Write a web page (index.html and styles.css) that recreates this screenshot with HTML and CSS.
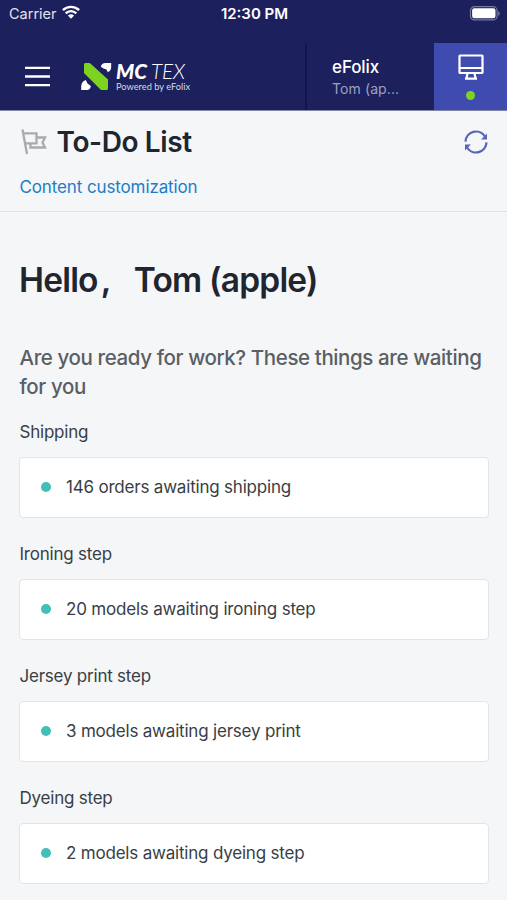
FILE: index.html
```html
<!DOCTYPE html>
<html lang="en">
<head>
<meta charset="utf-8">
<title>To-Do List</title>
<link rel="stylesheet" href="styles.css">
</head>
<body>
<header class="top">
  <div class="status">
    <div class="carrier"><span>Carrier</span>
      <svg width="18" height="14" viewBox="0 0 18 14" fill="none" stroke="#fff" stroke-width="2.4"><path d="M.9 5.2a11.5 11.5 0 0 1 16.2 0M3.7 8.3a7.5 7.5 0 0 1 10.6 0"/><path d="M9 13.8 5.9 10.6a4.5 4.5 0 0 1 6.2 0Z" fill="#fff" stroke="none"/></svg>
    </div>
    <div class="time">12:30 PM</div>
    <svg class="battery" width="31" height="15" viewBox="0 0 31 15"><rect x="1.5" y=".7" width="26.6" height="13.2" rx="4" fill="none" stroke="#777a9d" stroke-width="1.2"/><rect x="3.1" y="2.3" width="23.4" height="10" rx="2.3" fill="#fff"/><path d="M29.2 5v5q1.500-.7 1.500-2.500T29.200 5" fill="#777a9d"/></svg>
  </div>
  <nav class="nav">
    <div class="brand">
      <svg class="menu" width="25" height="21" viewBox="0 0 25 21" stroke="#fff" stroke-width="2.4"><path d="M0 1.900h25M0 10.500h25M0 19.100h25"/></svg>
      <svg class="logo" width="112" height="32" viewBox="0 0 112 32">
        <path d="M4 2h4.800L27 18.500V28L26 29h-6L3 12V3Z" fill="#7ed321"/>
        <path d="M19.800 5.800Q20.500 2.200 24.500 2H30.200V6Q30.200 9.800 26.800 11.200L25.500 8.500 22.500 7.500Z" fill="#fff"/>
        <path d="M4.800 19 6.500 22.500 9.800 25Q9.500 28.500 6.500 29H.2V25.500Q.3 20.500 4.800 19Z" fill="#fff"/>
        <text class="mc" x="35" y="17.500" textLength="31" lengthAdjust="spacingAndGlyphs">MC</text>
        <text class="tex" x="70" y="17.500" textLength="34" lengthAdjust="spacingAndGlyphs">TEX</text>
        <text class="powered" x="35" y="28.800" textLength="74" lengthAdjust="spacingAndGlyphs">Powered by eFolix</text>
      </svg>
    </div>
    <div class="user"><div class="company">eFolix</div><div class="name">Tom (ap...</div></div>
    <div class="device">
      <svg width="26" height="26" viewBox="0 0 26 26" fill="none" stroke="#fff" stroke-width="2.2"><rect x="1.500" y="1.500" width="23" height="17.500" rx=".5"/><path d="M1.500 14h23M9.500 19 8.500 24.500M16.500 19l1 5.500M7 24.700h12"/></svg>
      <i class="online"></i>
    </div>
  </nav>
</header>
<section class="heading">
  <div class="title-row">
    <svg class="flag" width="26" height="26" viewBox="0 0 26 26" fill="none" stroke="#a9abb1" stroke-width="2.3"><path d="M1.500.5 6 25M2.200 4.300H15.500V14.300H4M15.500 8.500H24L21.500 13.500 24 18.500H9.500V14.300" /></svg>
    <h1>To-Do List</h1>
    <svg class="refresh" width="24" height="24" viewBox="0 0 24 24" fill="none" stroke="#5865b9" stroke-width="2.3"><path d="M1.500 11.600A10.500 10.500 0 0 1 20.900 6.500M22.500 12.400A10.500 10.500 0 0 1 3.100 17.500"/><path d="M23 3.500V9.400H17.100ZM1 20.500V14.600H6.900Z" fill="#5865b9" stroke="none"/></svg>
  </div>
  <a class="customize">Content customization</a>
</section>
<main>
  <h2><span>Hello</span><span class="comma">,</span><span>Tom (apple)</span></h2>
  <p class="intro">Are you ready for work? These things are waiting<br>for you</p>
  <section class="group"><h3>Shipping</h3><div class="card"><i></i><span>146 orders awaiting shipping</span></div></section>
  <section class="group"><h3>Ironing step</h3><div class="card"><i></i><span>20 models awaiting ironing step</span></div></section>
  <section class="group"><h3>Jersey print step</h3><div class="card"><i></i><span>3 models awaiting jersey print</span></div></section>
  <section class="group"><h3>Dyeing step</h3><div class="card"><i></i><span>2 models awaiting dyeing step</span></div></section>
</main>
</body>
</html>
```
FILE: styles.css
```css
* { box-sizing: border-box; }
body { margin: 0; height: 900px; overflow: hidden; background: #f4f6f8; color: #393e45; font-family: Inter, "Liberation Sans", sans-serif; }
h1, h2, h3, p { margin: 0; }
svg { display: block; flex: none; overflow: visible; }
.top { height: 111px; background: #1c215e; color: #fff; border-bottom: 1px solid #8085a5; }
.status { height: 43px; padding: 5px 7px 0 9px; display: grid; grid-template-columns: 1fr auto 1fr; align-items: start; }
.carrier { display: flex; gap: 5px; font-size: 14.500px; line-height: 18px; color: #e1e2ed; }
.time { font-size: 15px; line-height: 18px; font-weight: 600; }
.battery { justify-self: end; margin-top: 1px; }
.nav { height: 67px; display: grid; grid-template-columns: 305px 129px 73px; }
.brand { display: flex; padding: 18px 0 0 25px; }
.menu { margin-top: 5px; }
.logo { margin-left: 31px; }
.mc, .tex, .powered { font-family: Lato, sans-serif; fill: #fff; }
.mc { font-size: 21px; font-weight: 900; font-style: italic; }
.tex { font-size: 21.500px; font-weight: 300; font-style: italic; }
.powered { font-size: 10px; fill: #d6d7e5; }
.user { border-left: 2px solid #11164c; padding: 13px 0 0 25px; }
.company { font-size: 17px; line-height: 22px; font-weight: 500; letter-spacing: -.1px; }
.name { font-size: 14px; line-height: 22px; color: #9da0be; letter-spacing: .1px; }
.device { background: #404bb0; display: flex; flex-direction: column; align-items: center; padding-top: 11px; }
.online { width: 9px; height: 9px; border-radius: 50%; background: #7ed321; margin-top: 11px; }
.heading { height: 101px; padding: 13px 19px 0 19.500px; border-bottom: 1px solid #dfe2e5; }
.title-row { display: flex; height: 36px; align-items: center; }
.flag { margin-left: 1px; }
.refresh { margin-left: auto; }
h1 { margin-left: 10px; font-size: 28px; line-height: 36px; font-weight: 600; color: #20252e; letter-spacing: -.4px; }
.customize { display: block; margin-top: 16px; font-size: 17px; line-height: 22px; color: #1b7dc8; letter-spacing: -.12px; }
main { padding: 46px 18px 0 19px; }
h2 { display: flex; height: 44px; font-size: 33.500px; line-height: 44px; font-weight: 600; color: #20252e; letter-spacing: -.8px; }
.comma { width: 36px; padding-left: 3px; }
.intro { margin-top: 41px; font-size: 20.500px; line-height: 29px; font-weight: 500; color: #5a5e65; height: 58px; white-space: nowrap; letter-spacing: -.39px; padding-left: .5px; }
.group { margin-top: 19px; height: 103px; }
h3 { font-size: 17px; line-height: 24px; font-weight: 400; letter-spacing: -.22px; padding-left: .5px; }
.card { height: 61px; margin-top: 13px; padding: 0 0 1px 21px; display: flex; align-items: center; background: #fff; border: 1px solid #e2e5e8; border-radius: 4px; font-size: 17px; letter-spacing: -.2px; }
.card i { width: 10px; height: 10px; border-radius: 50%; background: #43bfb8; margin-right: 15px; }
```
